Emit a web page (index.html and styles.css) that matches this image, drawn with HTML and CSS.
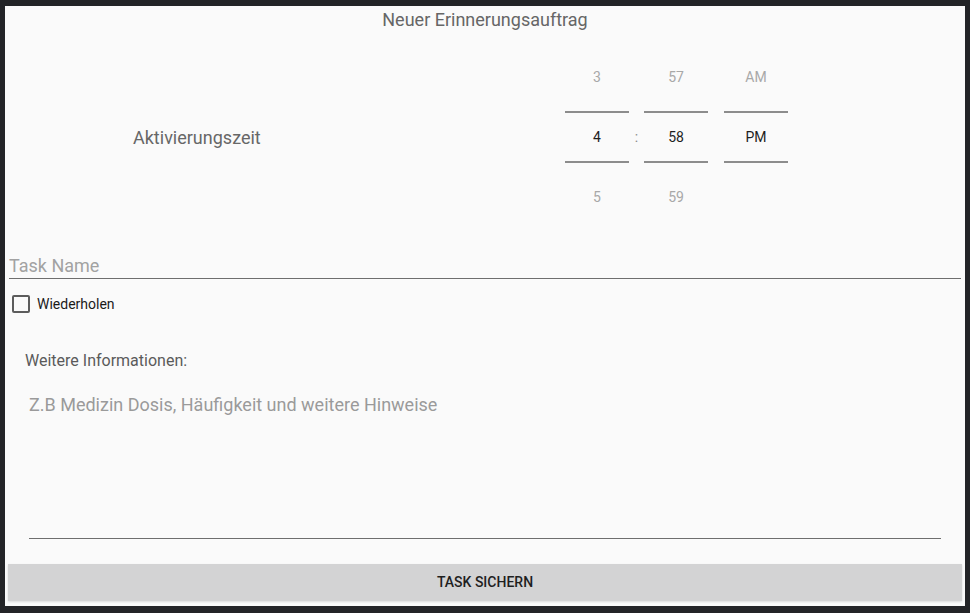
FILE: index.html
```html
<!DOCTYPE html>
<html lang="de">
<head>
<meta charset="utf-8">
<title>Neuer Erinnerungsauftrag</title>
<link rel="stylesheet" href="styles.css">
</head>
<body>
<div class="dialog">
  <div class="title">Neuer Erinnerungsauftrag</div>
  <div class="time-row">
    <div class="time-label">Aktivierungszeit</div>
    <div class="picker">
      <div class="col">
        <div class="cell dim">3</div>
        <div class="cell sel">4</div>
        <div class="cell dim">5</div>
      </div>
      <div class="colon">:</div>
      <div class="col">
        <div class="cell dim">57</div>
        <div class="cell sel">58</div>
        <div class="cell dim">59</div>
      </div>
      <div class="col ampm">
        <div class="cell dim">AM</div>
        <div class="cell sel">PM</div>
        <div class="cell dim"></div>
      </div>
    </div>
  </div>
  <div class="task-name">Task Name</div>
  <label class="check-row"><span class="box"></span><span class="check-text">Wiederholen</span></label>
  <div class="info-label">Weitere Informationen:</div>
  <div class="info-field">Z.B Medizin Dosis, Häufigkeit und weitere Hinweise</div>
  <div class="button">TASK SICHERN</div>
</div>
</body>
</html>
```

FILE: styles.css
```css
html, body {
  margin: 0;
  padding: 0;
  background: #232427;
  font-family: Roboto, "Noto Sans", sans-serif;
}
.dialog {
  margin: 6px 5px 7px 5px;
  width: 960px;
  height: 600px;
  background: #fafafa;
  display: flex;
  flex-direction: column;
}
.title {
  height: 27px;
  line-height: 27px;
  text-align: center;
  font-size: 18px;
  color: #666666;
}
.time-row {
  margin-top: 14px;
  display: flex;
  align-items: center;
  height: 180px;
}
.time-label {
  width: 432px;
  padding-left: 128px;
  font-size: 18px;
  color: #676767;
}
.picker {
  display: flex;
  align-items: stretch;
}
.col {
  width: 64px;
  display: flex;
  flex-direction: column;
}
.col.ampm {
  margin-left: 16px;
}
.cell {
  height: 60px;
  display: flex;
  align-items: center;
  justify-content: center;
  font-size: 14px;
}
.cell.dim {
  color: #a8a8a8;
}
.cell.sel {
  height: 48px;
  margin: 4px 0;
  border-top: 2px solid #8c8c8c;
  border-bottom: 2px solid #8c8c8c;
  color: #1e1e1e;
}
.colon {
  width: 15px;
  display: flex;
  align-items: center;
  justify-content: center;
  font-size: 14px;
  color: #8a8a8a;
}
.task-name {
  margin: 27px 4px 0 4px;
  height: 24px;
  line-height: 24px;
  font-size: 18px;
  color: #a2a2a2;
  border-bottom: 1px solid #6e6e6e;
}
.check-row {
  margin-top: 16px;
  margin-left: 7px;
  display: flex;
  align-items: center;
  height: 18px;
}
.box {
  width: 14px;
  height: 14px;
  border: 2px solid #5c5c5c;
  border-radius: 2px;
}
.check-text {
  margin-left: 7px;
  font-size: 14px;
  color: #1a1a1a;
}
.info-label {
  margin-top: 38px;
  padding-left: 20px;
  height: 20px;
  line-height: 20px;
  font-size: 16px;
  color: #5a5a5a;
}
.info-field {
  margin: 22px 24px 0 24px;
  height: 145px;
  line-height: 24px;
  font-size: 18px;
  color: #9a9a9a;
  border-bottom: 1px solid #6e6e6e;
}
.button {
  margin: 25px 3px 0 3px;
  height: 37px;
  line-height: 37px;
  text-align: center;
  background: #d3d3d4;
  font-size: 14px;
  font-weight: 500;
  color: #1f1f1f;
  box-shadow: 0 1px 2px rgba(0,0,0,0.12);
}
```
